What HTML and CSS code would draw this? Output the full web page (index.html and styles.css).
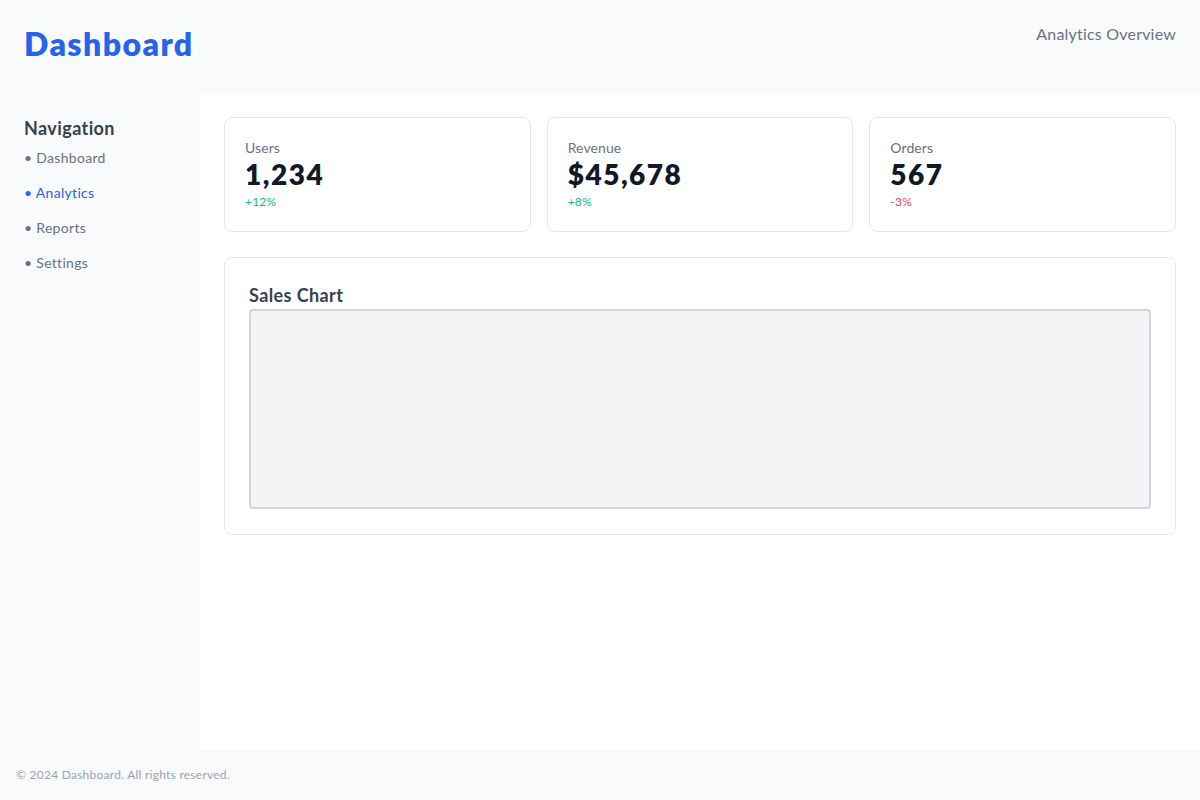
FILE: index.html
```html
<!DOCTYPE html>
<html lang="en">
<head>
<meta charset="utf-8">
<title>Dashboard</title>
<link rel="stylesheet" href="styles.css">
</head>
<body>
<div class="page">
  <header class="header">
    <h1 class="title">Dashboard</h1>
    <div class="subtitle">Analytics Overview</div>
  </header>
  <div class="body">
    <aside class="sidebar">
      <h2 class="nav-title">Navigation</h2>
      <ul class="nav">
        <li class="nav-item">• Dashboard</li>
        <li class="nav-item active">• Analytics</li>
        <li class="nav-item">• Reports</li>
        <li class="nav-item">• Settings</li>
      </ul>
    </aside>
    <main class="main">
      <div class="stats">
        <div class="card">
          <div class="label">Users</div>
          <div class="value">1,234</div>
          <div class="change up">+12%</div>
        </div>
        <div class="card">
          <div class="label">Revenue</div>
          <div class="value">$45,678</div>
          <div class="change up">+8%</div>
        </div>
        <div class="card">
          <div class="label">Orders</div>
          <div class="value">567</div>
          <div class="change down">-3%</div>
        </div>
      </div>
      <section class="chart-card">
        <h3 class="chart-title">Sales Chart</h3>
        <div class="chart"></div>
      </section>
    </main>
  </div>
  <footer class="footer">© 2024 Dashboard. All rights reserved.</footer>
</div>
</body>
</html>
```
FILE: styles.css
```css
* { box-sizing: border-box; }
html, body { margin: 0; padding: 0; }
body {
  font-family: Lato, "Open Sans", "Liberation Sans", sans-serif;
  background: #f9fafb;
  color: #374151;
}
.page {
  width: 1200px;
  height: 800px;
  display: flex;
  flex-direction: column;
}
.header {
  height: 93px;
  flex: none;
  display: flex;
  justify-content: space-between;
  align-items: flex-start;
  padding: 0 24px 0 24px;
  background: #f9fafb;
}
.title {
  margin: 23px 0 0 0;
  font-size: 32px;
  line-height: 42px;
  font-weight: 800;
  color: #2563eb;
  letter-spacing: 1.4px;
}
.subtitle {
  margin-top: 23px;
  font-size: 16px;
  line-height: 22px;
  color: #6b7280;
  font-weight: 400;
  letter-spacing: 0.2px;
}
.body {
  flex: 1;
  display: flex;
  min-height: 0;
}
.sidebar {
  width: 200px;
  flex: none;
  background: #f9fafb;
  padding: 24px;
}
.nav-title {
  margin: 0;
  font-size: 18px;
  line-height: 22px;
  font-weight: 700;
  color: #374151;
  letter-spacing: 0.4px;
}
.nav {
  list-style: none;
  margin: 1px 0 0 0;
  padding: 0;
}
.nav-item {
  padding: 8px 0;
  font-size: 14px;
  line-height: 19px;
  color: #6b7280;
  letter-spacing: 0.3px;
}
.nav-item.active { color: #2563eb; }
.main {
  flex: 1;
  background: #ffffff;
  padding: 24px;
}
.stats {
  display: grid;
  grid-template-columns: repeat(3, 1fr);
  gap: 16px;
}
.card {
  border: 1px solid #e5e7eb;
  border-radius: 8px;
  padding: 20px;
  background: #fff;
}
.label {
  font-size: 14px;
  line-height: 19px;
  color: #6b7280;
  letter-spacing: 0.1px;
}
.value {
  font-size: 28px;
  line-height: 35px;
  font-weight: 800;
  color: #111827;
  letter-spacing: 1.5px;
}
.change {
  font-size: 12px;
  line-height: 19px;
  letter-spacing: 0.2px;
}
.change.up { color: #10b981; }
.change.down { color: #ef4444; }
.chart-card {
  margin-top: 25px;
  border: 1px solid #e5e7eb;
  border-radius: 8px;
  padding: 24px 24px 25px 24px;
  background: #fff;
}
.chart-title {
  margin: 0;
  font-size: 18px;
  line-height: 27px;
  font-weight: 700;
  color: #374151;
  letter-spacing: 0.4px;
}
.chart {
  height: 200px;
  background: #f3f4f6;
  border: 2px solid #d1d5db;
  border-radius: 4px;
}
.footer {
  height: 50px;
  flex: none;
  padding: 17px 16px 0 16px;
  font-size: 12px;
  line-height: 16px;
  color: #9ca3af;
  background: #f9fafb;
  letter-spacing: 0.25px;
}
```
